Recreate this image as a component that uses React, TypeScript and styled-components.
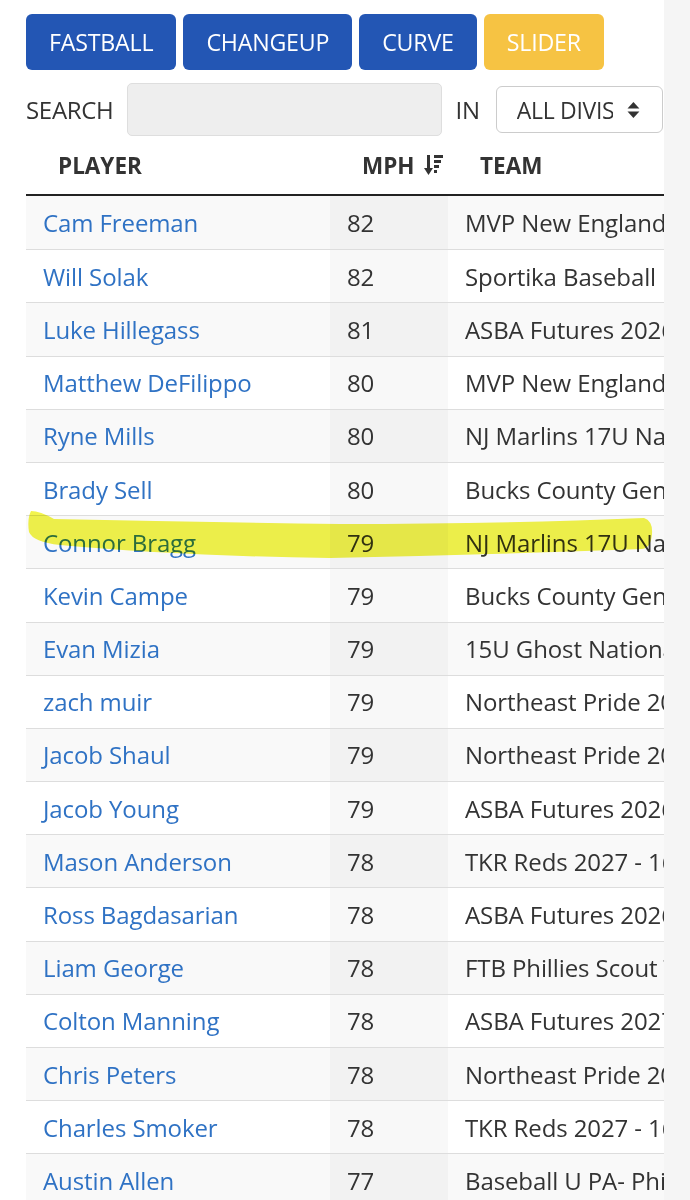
import React from "react";
import styled, { createGlobalStyle } from "styled-components";

const Global = createGlobalStyle`
  html, body { margin: 0; padding: 0; background: #ffffff; }
  body { font-family: "Open Sans", "Liberation Sans", sans-serif; color: #333333; }
  * { box-sizing: border-box; }
`;

const Page = styled.div`
  position: relative;
  width: 690px;
  height: 1200px;
  overflow: hidden;
  display: flex;
`;

const Main = styled.div`
  flex: 1;
  min-width: 0;
  padding: 14px 0 0 26px;
  display: flex;
  flex-direction: column;
`;

const Strip = styled.div`
  width: 26px;
  flex: none;
  background: #f5f5f5;
`;

const Pills = styled.div`
  display: flex;
  gap: 7px;
  height: 56px;
`;

const Pill = styled.button<{ $active?: boolean }>`
  height: 56px;
  padding: 0 23px;
  border: none;
  border-radius: 6px;
  background: ${(p) => (p.$active ? "#f6c343" : "#2356b4")};
  color: #ffffff;
  font-family: "Open Sans", "Liberation Sans", sans-serif;
  font-size: 23.2px;
  font-weight: 400;
  letter-spacing: -0.2px;
  display: flex;
  align-items: center;
  justify-content: center;
`;

const SearchRow = styled.div`
  display: flex;
  align-items: center;
  margin-top: 13px;
  height: 53px;
`;

const Label = styled.span`
  font-size: 24px;
  color: #333333;
  letter-spacing: -0.3px;
`;

const SearchBox = styled.div`
  width: 315px;
  height: 53px;
  margin: 0 14px 0 13px;
  background: #eeeeee;
  border: 1px solid #dedede;
  border-radius: 5px;
`;

const Select = styled.div`
  margin-left: 16px;
  width: 167px;
  height: 47px;
  border: 1px solid #cccccc;
  border-radius: 6px;
  background: #ffffff;
  display: flex;
  align-items: center;
  padding: 0 22px 0 20px;
  gap: 14px;
`;

const SelectText = styled.span`
  font-size: 23px;
  color: #333333;
  width: 97px;
  overflow: hidden;
  white-space: nowrap;
  letter-spacing: -0.3px;
`;

const Table = styled.div`
  width: 638px;
  overflow: hidden;
`;

const HeadRow = styled.div`
  display: grid;
  grid-template-columns: 304px 118px 1fr;
  height: 60px;
  align-items: center;
  border-bottom: 2px solid #222222;
`;

const HeadCell = styled.div`
  padding-left: 32px;
  font-size: 22.5px;
  font-weight: 700;
  color: #333333;
  display: flex;
  align-items: center;
  gap: 9px;
  white-space: nowrap;
`;

const Row = styled.div<{ $odd: boolean; $first: boolean }>`
  display: grid;
  grid-template-columns: 304px 118px 1fr;
  height: 53.2px;
  border-top: ${(p) => (p.$first ? "none" : "1px solid #dddddd")};
  background: ${(p) => (p.$odd ? "#f9f9f9" : "#ffffff")};
`;

const Cell = styled.div<{ $sorted?: boolean }>`
  display: flex;
  align-items: center;
  padding-left: 17px;
  font-size: 24px;
  color: #333333;
  white-space: nowrap;
  overflow: hidden;
  letter-spacing: -0.1px;
  background: ${(p) => (p.$sorted ? "rgba(0,0,0,0.028)" : "transparent")};
`;

const NameLink = styled.a`
  color: #2f72c4;
  text-decoration: none;
`;

const Highlight = styled.svg`
  position: absolute;
  left: 0;
  top: 0;
  width: 690px;
  height: 1200px;
  pointer-events: none;
  mix-blend-mode: multiply;
`;

const SortIcon = () => (
  <svg width="20" height="24" viewBox="0 0 20 24">
    <rect x="3" y="2" width="3" height="15" fill="#333" />
    <path d="M0 15 L9 15 L4.5 22 Z" fill="#333" />
    <rect x="10" y="2" width="9" height="3" fill="#333" />
    <rect x="10" y="7" width="7" height="3" fill="#333" />
    <rect x="10" y="12" width="5" height="3" fill="#333" />
    <rect x="10" y="17" width="3" height="3" fill="#333" />
  </svg>
);

const Caret = () => (
  <svg width="13" height="18" viewBox="0 0 13 18">
    <path d="M6.5 1 L12.5 7.5 L0.5 7.5 Z" fill="#333" />
    <path d="M6.5 17 L12.5 10.5 L0.5 10.5 Z" fill="#333" />
  </svg>
);

const rows: [string, string, string][] = [
  ["Cam Freeman", "82", "MVP New England Scout Team"],
  ["Will Solak", "82", "Sportika Baseball 17U"],
  ["Luke Hillegass", "81", "ASBA Futures 2026"],
  ["Matthew DeFilippo", "80", "MVP New England Scout Team"],
  ["Ryne Mills", "80", "NJ Marlins 17U National"],
  ["Brady Sell", "80", "Bucks County Generals"],
  ["Connor Bragg", "79", "NJ Marlins 17U National"],
  ["Kevin Campe", "79", "Bucks County Generals"],
  ["Evan Mizia", "79", "15U Ghost National"],
  ["zach muir", "79", "Northeast Pride 2026"],
  ["Jacob Shaul", "79", "Northeast Pride 2027"],
  ["Jacob Young", "79", "ASBA Futures 2026"],
  ["Mason Anderson", "78", "TKR Reds 2027 - 16U"],
  ["Ross Bagdasarian", "78", "ASBA Futures 2026"],
  ["Liam George", "78", "FTB Phillies Scout Team"],
  ["Colton Manning", "78", "ASBA Futures 2027"],
  ["Chris Peters", "78", "Northeast Pride 2026"],
  ["Charles Smoker", "78", "TKR Reds 2027 - 16U"],
  ["Austin Allen", "77", "Baseball U PA- Phillies"],
];

export default function App() {
  return (
    <>
      <Global />
      <Page>
        <Main>
          <Pills>
            <Pill>FASTBALL</Pill>
            <Pill>CHANGEUP</Pill>
            <Pill>CURVE</Pill>
            <Pill $active>SLIDER</Pill>
          </Pills>
          <SearchRow>
            <Label>SEARCH</Label>
            <SearchBox />
            <Label>IN</Label>
            <Select>
              <SelectText>ALL DIVISIONS</SelectText>
              <Caret />
            </Select>
          </SearchRow>
          <Table>
            <HeadRow>
              <HeadCell>PLAYER</HeadCell>
              <HeadCell>
                MPH <SortIcon />
              </HeadCell>
              <HeadCell>TEAM</HeadCell>
            </HeadRow>
            {rows.map(([name, mph, team], i) => (
              <Row key={name} $odd={i % 2 === 0} $first={i === 0}>
                <Cell>
                  <NameLink href="#">{name}</NameLink>
                </Cell>
                <Cell $sorted>{mph}</Cell>
                <Cell>{team}</Cell>
              </Row>
            ))}
          </Table>
        </Main>
        <Strip />
        <Highlight viewBox="0 0 690 1200">
          <path
            d="M31 511 Q40 511 54 519 Q200 522 340 524 Q500 524 644 518 Q653 521 652 534 Q651 548 642 549 Q480 555 330 558 Q180 556 60 545 Q33 542 29 532 Q27 519 31 511 Z"
            fill="#f2f44c"
          />
        </Highlight>
      </Page>
    </>
  );
}
